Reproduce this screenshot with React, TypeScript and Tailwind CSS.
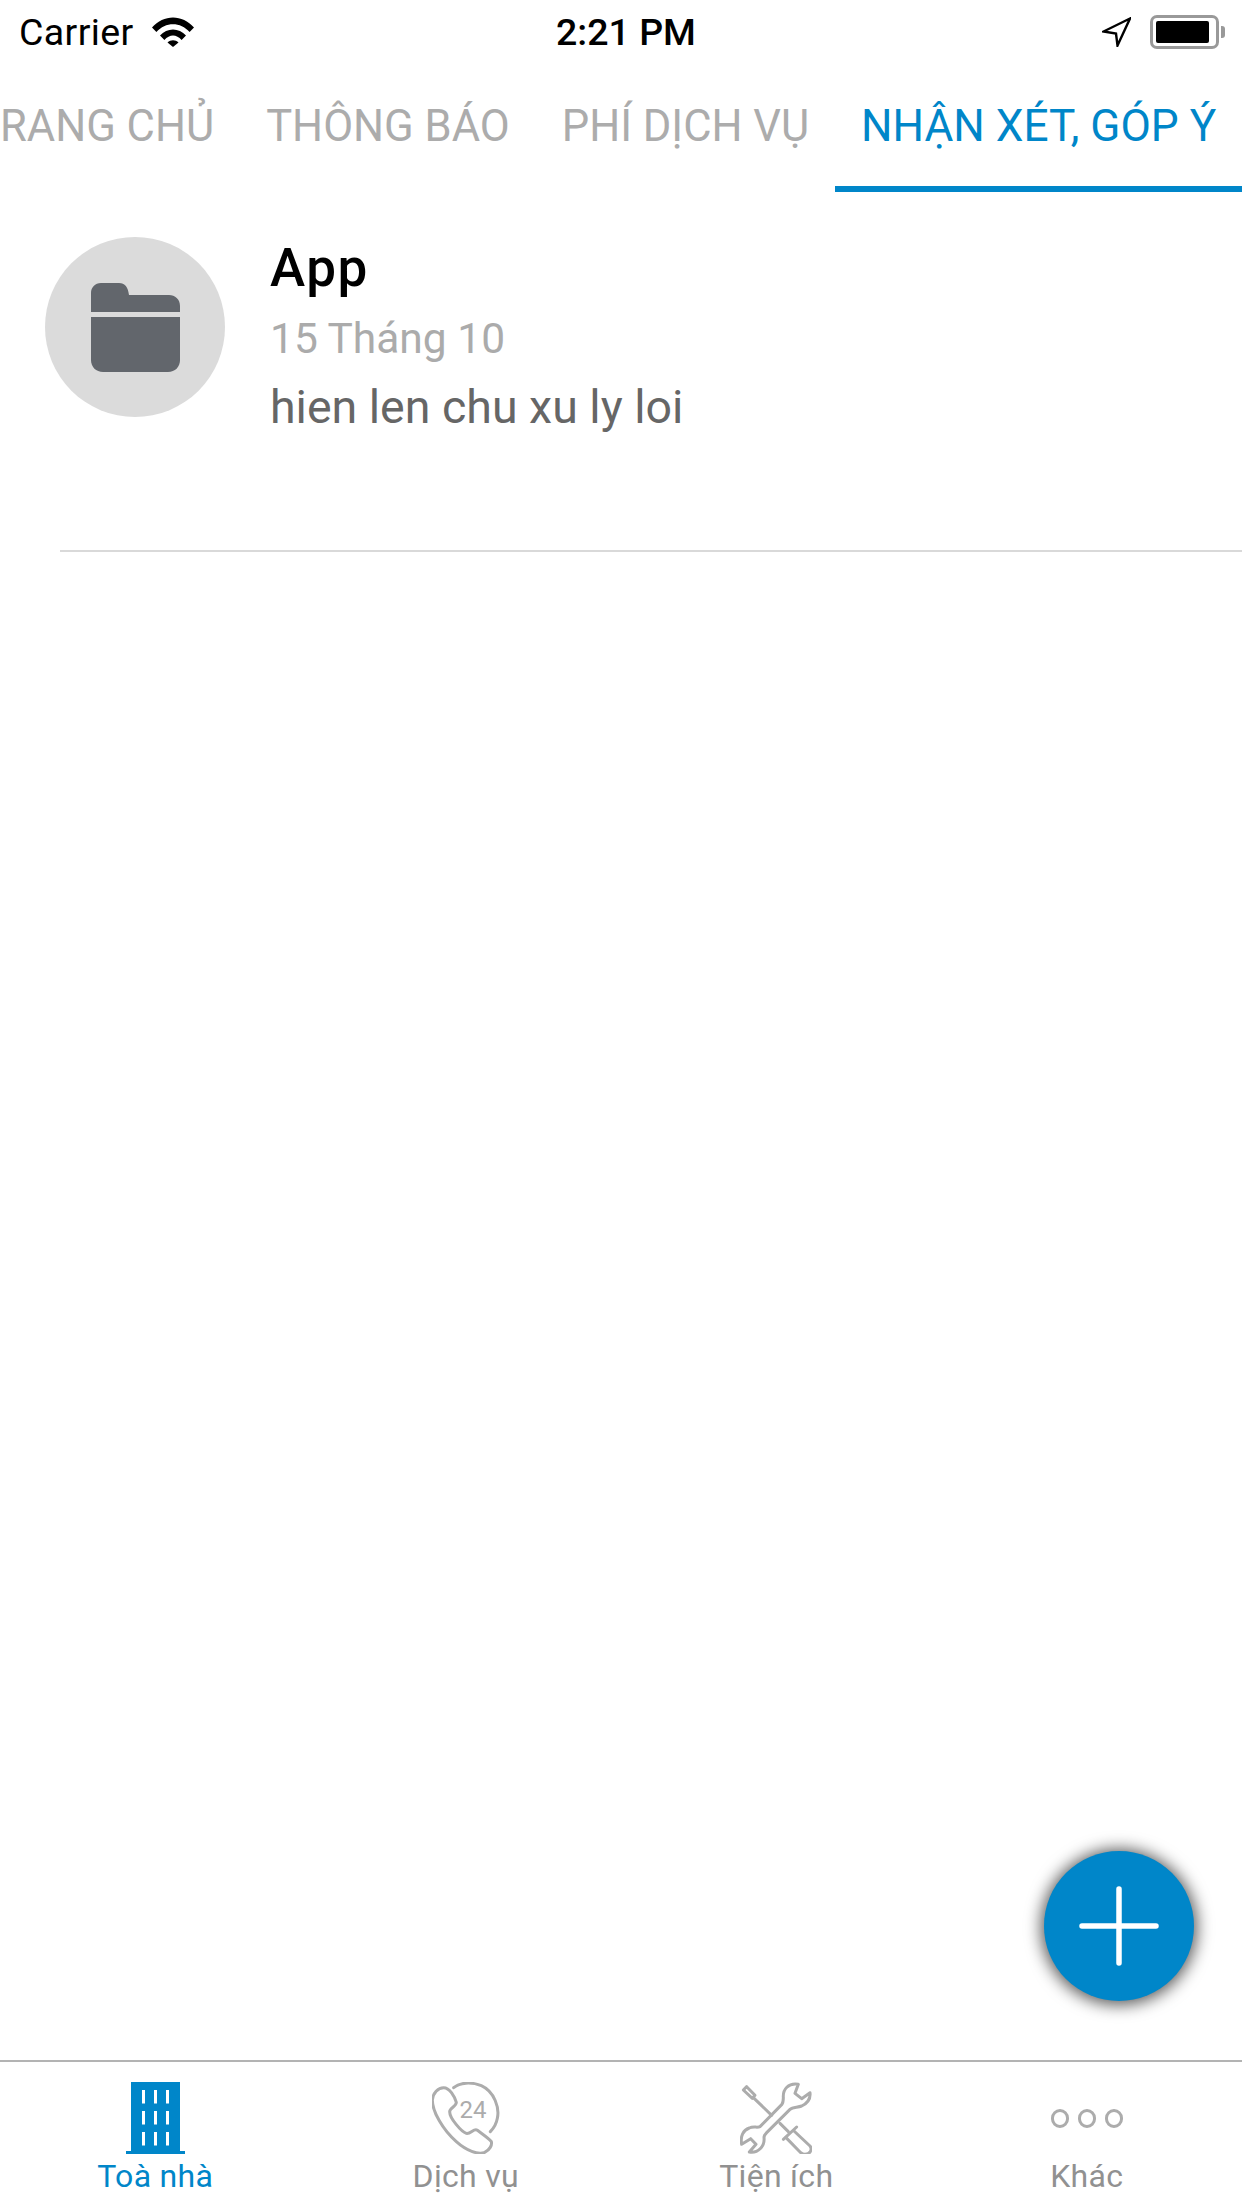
import type { ReactNode } from 'react'

const tabs = ['TRANG CHỦ', 'THÔNG BÁO', 'PHÍ DỊCH VỤ', 'NHẬN XÉT, GÓP Ý']

function WifiIcon() {
  return (
    <svg width="42" height="30" viewBox="0 0 42 30" className="ml-[18px]">
      <path d="M0 10.5C11.5 -3 30.5 -3 42 10.5L37.6 15C28.5 4.5 13.5 4.5 4.4 15Z" fill="#000" />
      <path d="M8 18.5C15 10.5 27 10.5 34 18.5L29.6 23C24.5 17 17.5 17 12.4 23Z" fill="#000" />
      <path d="M15.5 25.5C18.5 22.5 23.5 22.5 26.5 25.5L21 30Z" fill="#000" />
    </svg>
  )
}

function LocationIcon() {
  return (
    <svg width="29" height="30" viewBox="0 0 29 30">
      <path d="M28 1.5L1.5 14.5L14 16.5L15.5 28.5Z" fill="none" stroke="#000" strokeWidth="2.4" strokeLinejoin="miter" />
    </svg>
  )
}

function BatteryIcon() {
  return (
    <div className="ml-[19px] flex items-center">
      <div className="flex h-[34px] w-[69px] items-center rounded-[7px] border-[3px] border-[#999999] pl-[3px]">
        <div className="h-[22px] w-[53px] rounded-[2px] bg-black" />
      </div>
      <div className="ml-[2px] h-[12px] w-[4px] rounded-r-[3px] bg-[#999999]" />
    </div>
  )
}

function StatusBar() {
  return (
    <div className="relative flex h-[64px] shrink-0 items-center justify-between pl-[19px] pr-[17px] font-['Roboto',sans-serif] text-[37.5px] text-black">
      <div className="flex items-center">
        <span className="leading-[40px] tracking-[0.4px]">Carrier</span>
        <WifiIcon />
      </div>
      <span className="absolute left-[556px] top-[12px] font-medium leading-[40px]">2:21 PM</span>
      <div className="flex items-center">
        <LocationIcon />
        <BatteryIcon />
      </div>
    </div>
  )
}

function TabBar() {
  return (
    <div className="flex h-[128px] shrink-0 justify-end overflow-hidden font-['Roboto',sans-serif]">
      {tabs.map((t, i) => (
        <div
          key={t}
          className={`flex shrink-0 items-center whitespace-nowrap pt-[3px] ${
            i === 3
              ? 'border-b-[6px] border-[#0086c9] px-[25.8px] text-[44.2px] text-[#0086c9]'
              : 'border-b-[6px] border-transparent px-[26px] text-[43.5px] text-[#acacac]'
          }`}
        >
          {t}
        </div>
      ))}
    </div>
  )
}

function FolderIcon() {
  return (
    <svg width="89" height="89" viewBox="0 0 89 89">
      <path
        d="M0 29V10C0 4.5 4 0 10 0H28C34 0 37 4 38 12H78C84 12 89 16 89 23V29Z"
        fill="#62666c"
      />
      <path d="M0 34H89V77C89 84 84 89 77 89H12C5 89 0 84 0 77Z" fill="#62666c" />
    </svg>
  )
}

function FeedbackRow() {
  return (
    <div className="ml-[60px] h-[360px] border-b-2 border-[#d9d9d9]">
      <div className="-ml-[15px] flex gap-[45px] pt-[45px]">
        <div className="flex h-[180px] w-[180px] shrink-0 items-center justify-center rounded-full bg-[#dbdbdb]">
          <FolderIcon />
        </div>
        <div className="font-['Roboto',sans-serif]">
          <div className="mt-[3px] text-[53px] font-medium leading-[56px] tracking-[1.5px] text-black">App</div>
          <div className="mt-[18px] text-[42.5px] leading-[50px] text-[#ababab]">15 Tháng 10</div>
          <div className="mt-[17px] text-[46.5px] leading-[52px] text-[#666666]">hien len chu xu ly loi</div>
        </div>
      </div>
    </div>
  )
}

function BuildingIcon() {
  const xs = [11, 23, 35]
  const ys = [8, 29, 50]
  return (
    <svg width="59" height="72" viewBox="0 0 59 72">
      <rect x="5" y="0" width="49" height="69" fill="#0086c9" />
      <rect x="0" y="69" width="59" height="3" fill="#0086c9" />
      {ys.map((y) =>
        xs.map((x) => <rect key={`${x}-${y}`} x={x + 5} y={y} width="3" height="13.5" fill="#fff" />),
      )}
    </svg>
  )
}

function PhoneIcon() {
  return (
    <svg width="68" height="72" viewBox="97 51 204 216" fill="none" stroke="#acacac" strokeWidth="9" strokeLinecap="round">
      <path d="M132 68C115 68 100 85 98 105C98 140 130 195 170 230C200 257 235 270 255 262C270 255 278 240 275 230C270 222 245 205 232 195C222 190 212 208 200 205C185 200 150 160 150 140C150 128 170 125 170 112C165 95 150 68 132 68Z" />
      <path d="M162 68C180 52 215 50 245 62C285 80 300 130 293 160C290 178 282 190 272 200" />
      <text x="220" y="160" textAnchor="middle" fontFamily="Roboto, sans-serif" fontSize="72" fill="#acacac" stroke="none">
        24
      </text>
    </svg>
  )
}

function ToolsIcon() {
  return (
    <svg width="72" height="72" viewBox="60 48 216 216" fill="none" stroke="#acacac" strokeWidth="9" strokeLinejoin="round" strokeLinecap="round">
      <path d="M235 55C205 50 188 70 190 95C190 105 190 110 185 116L120 182C112 186 100 180 88 186C70 192 60 210 65 235L92 218L108 235L88 258C115 262 135 240 132 215C132 208 135 205 140 200L210 130C218 122 232 125 245 120C262 112 272 98 270 80L245 98L225 82Z" />
      <path d="M70 72L80 62L105 88L97 97Z" />
      <path d="M100 95L155 148" />
      <path d="M180 172L205 197" />
      <path d="M190 220L230 183" />
      <path d="M222 195L270 240C278 250 270 265 255 265C248 265 245 262 240 258L198 215" />
    </svg>
  )
}

function DotsIcon() {
  return (
    <div className="flex h-[72px] items-center gap-[9px]">
      <div className="h-[19px] w-[18px] rounded-full border-[3px] border-[#acacac]" />
      <div className="h-[19px] w-[18px] rounded-full border-[3px] border-[#acacac]" />
      <div className="h-[19px] w-[18px] rounded-full border-[3px] border-[#acacac]" />
    </div>
  )
}

function NavItem({ label, active, children }: { label: string; active?: boolean; children: ReactNode }) {
  return (
    <div className="flex flex-1 flex-col items-center">
      <div className="flex h-[72px] items-start justify-center">{children}</div>
      <span
        className={`mt-[4px] text-[32px] leading-[36px] tracking-[0.3px] ${active ? 'text-[#0086c9]' : 'text-[#919191]'}`}
      >
        {label}
      </span>
    </div>
  )
}

function BottomNav() {
  return (
    <div className="flex h-[148px] shrink-0 border-t-2 border-[#b3b3b3] pt-[20px] font-['Roboto',sans-serif]">
      <NavItem label="Toà nhà" active>
        <BuildingIcon />
      </NavItem>
      <NavItem label="Dịch vụ">
        <PhoneIcon />
      </NavItem>
      <NavItem label="Tiện ích">
        <ToolsIcon />
      </NavItem>
      <NavItem label="Khác">
        <DotsIcon />
      </NavItem>
    </div>
  )
}

export default function App() {
  return (
    <div className="relative flex h-[2208px] w-[1242px] flex-col overflow-hidden bg-white">
      <StatusBar />
      <TabBar />
      <div className="flex-1">
        <FeedbackRow />
      </div>
      <BottomNav />
      <button
        type="button"
        className="absolute bottom-[207px] right-[48px] flex h-[150px] w-[150px] items-center justify-center rounded-full bg-[#0086c9] shadow-[0_1px_16px_3px_rgba(0,0,0,0.65)]"
      >
        <svg width="80" height="80" viewBox="0 0 80 80">
          <path d="M3 40H77M40 3V77" stroke="#fff" strokeWidth="5.5" strokeLinecap="round" />
        </svg>
      </button>
    </div>
  )
}
